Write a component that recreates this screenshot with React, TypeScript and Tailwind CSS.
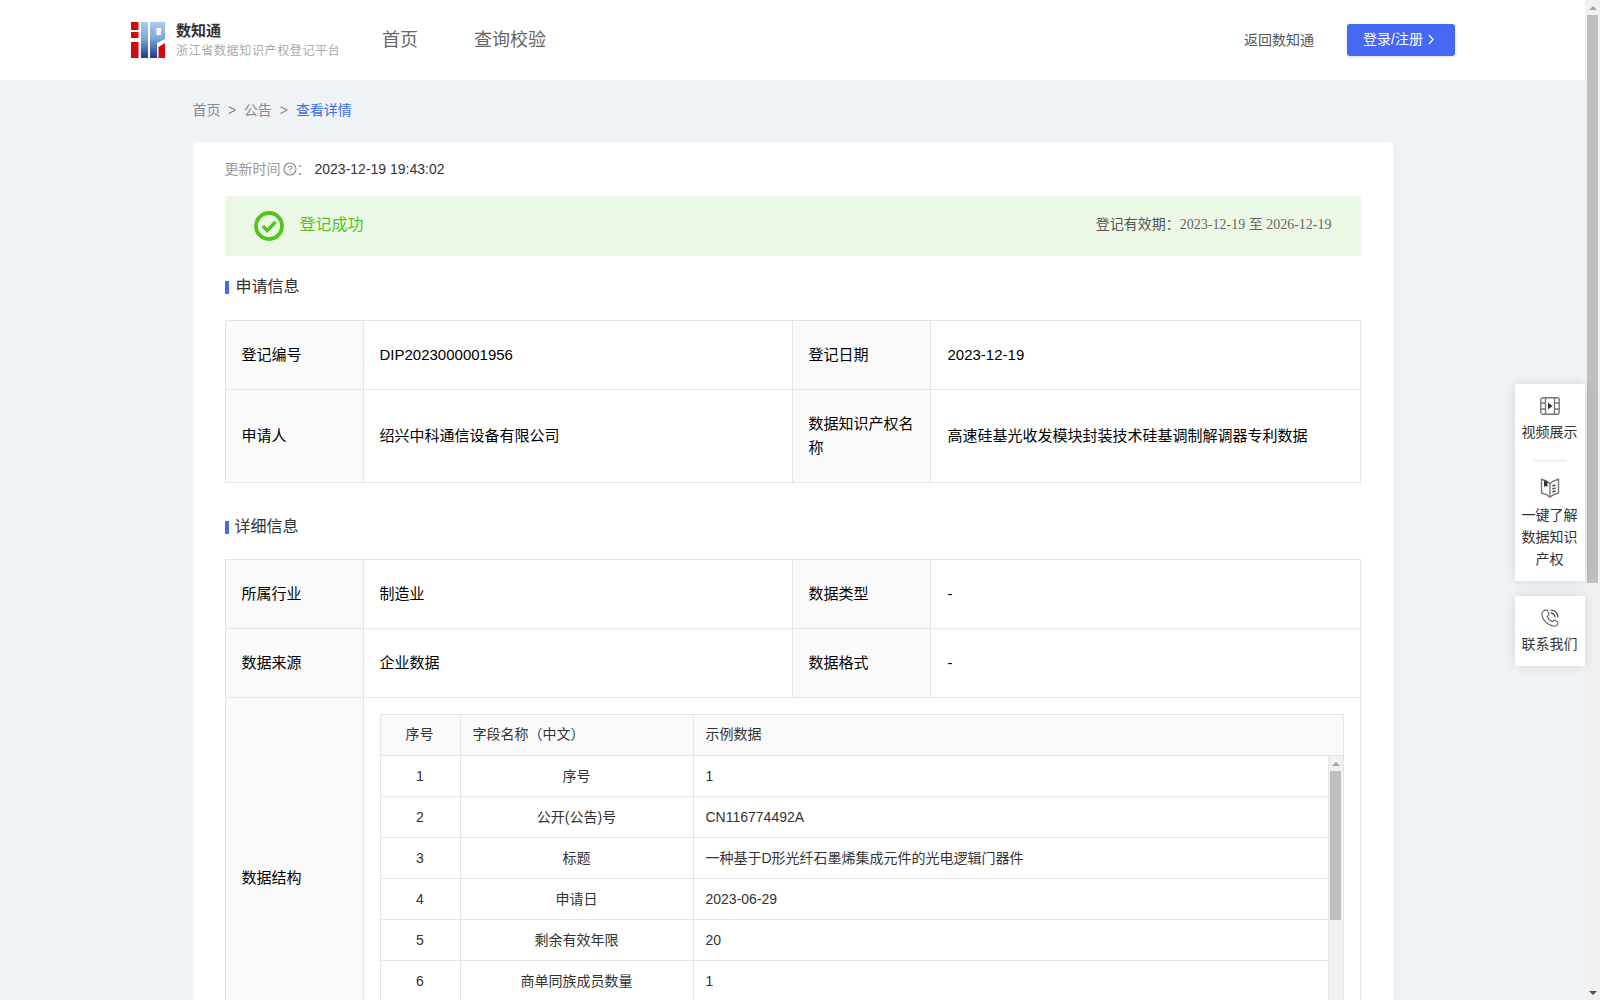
import React from "react";

function Logo() {
  return (
    <svg width="34" height="36" viewBox="0 0 34 36" className="shrink-0">
      <defs>
        <linearGradient id="lg" x1="0" y1="0" x2="0" y2="1">
          <stop offset="0" stopColor="#a9cbef" />
          <stop offset="0.45" stopColor="#7fa8dc" />
          <stop offset="1" stopColor="#1c3a8c" />
        </linearGradient>
      </defs>
      <rect x="0" y="0" width="7.5" height="8" fill="#d10a12" />
      <rect x="0" y="10" width="7.5" height="6" fill="#d10a12" />
      <rect x="0" y="20" width="7.5" height="16" fill="#d10a12" />
      <rect x="10" y="0" width="7" height="36" fill="url(#lg)" />
      <path d="M19 0H34V17L26 21V36H19Z" fill="url(#lg)" />
      <rect x="25.5" y="6" width="4.5" height="7" fill="#fff" />
      <path d="M27.5 25L34 21V36H27.5Z" fill="#d10a12" />
    </svg>
  );
}

function FilmIcon() {
  return (
    <svg width="20" height="18" viewBox="0 0 20 18" fill="none" stroke="#777" strokeWidth="1.4">
      <rect x="0.8" y="0.8" width="18.4" height="16.4" rx="2" />
      <path d="M5.5 1V17M14.5 1V17M1 6H5.5M1 12H5.5M14.5 6H19M14.5 12H19" />
      <path d="M8 5.5L12.5 9L8 12.5Z" fill="#333" stroke="none" />
    </svg>
  );
}

function BookIcon() {
  return (
    <svg width="20" height="20" viewBox="0 0 20 20" fill="none" stroke="#777" strokeWidth="1.4">
      <path d="M10 5.5C8 3.5 5 2 1.5 1.2V15C5 15.8 8 17.2 10 19.2C12 17.2 15 15.8 18.5 15V1.2C15.5 1.8 12 3.5 10 5.5Z" />
      <path d="M10 5.5V19" />
      <path d="M4 2.2L7.5 3.6V9L5.8 7.8L4 9Z" fill="#333" stroke="none" />
      <path d="M12.5 8L15.5 6.8M12.5 11L15.5 9.8M12.5 14L15.5 12.8" stroke="#444" />
    </svg>
  );
}

function PhoneIcon() {
  return (
    <svg width="20" height="20" viewBox="0 0 24 24" fill="none" stroke="#666" strokeWidth="1.3" strokeLinecap="round" strokeLinejoin="round">
      <path d="M7.5 2.5C8.3 2.5 9 3 9.3 3.8L10.6 7.2C10.8 7.8 10.6 8.4 10.2 8.8L8.6 10.2C9.6 13 11.8 15.4 14.6 16.6L16.2 15C16.6 14.6 17.3 14.4 17.8 14.7L20.8 16.4C21.5 16.8 21.8 17.6 21.5 18.4C20.8 20.4 19 22 16.8 21.8C9 21 2.6 14 2.2 7.4C2 5 4.6 2.5 7.5 2.5Z" />
      <path d="M13.5 2.5C17.8 3 21 6.4 21.5 10.5M13.5 6C15.8 6.5 17.6 8.2 18 10.5" stroke="#555" strokeWidth="1.6" />
    </svg>
  );
}

function ArrowUp({ fill }: { fill: string }) {
  return (
    <svg width="8" height="4" viewBox="0 0 8 4">
      <path d="M4 0L8 4H0Z" fill={fill} />
    </svg>
  );
}

function ArrowDown({ fill }: { fill: string }) {
  return (
    <svg width="8" height="4" viewBox="0 0 8 4">
      <path d="M4 4L8 0H0Z" fill={fill} />
    </svg>
  );
}

function SectionTitle({ children, gap }: { children: React.ReactNode; gap: string }) {
  return (
    <div className={`flex h-6 items-center text-base text-[#333] ${gap}`}>
      <span className="mt-[1px] h-[13px] w-1 shrink-0 bg-[#4569f5]" />
      <span>{children}</span>
    </div>
  );
}

const labelCell = "border border-[#e5e5e5] bg-[#fafafa] px-4 pb-[1px] align-middle text-left font-normal text-[15px] leading-6 text-black";
const valueCell = "border border-[#e5e5e5] px-4 pb-[1px] align-middle text-left text-[15px] leading-6 text-black";
const lastCell = "border border-[#e5e5e5] pl-[17px] pr-4 pb-[1px] align-middle text-left text-[15px] leading-6 text-black";

const rows: [string, string, string][] = [
  ["1", "序号", "1"],
  ["2", "公开(公告)号", "CN116774492A"],
  ["3", "标题", "一种基于D形光纤石墨烯集成元件的光电逻辑门器件"],
  ["4", "申请日", "2023-06-29"],
  ["5", "剩余有效年限", "20"],
  ["6", "商单同族成员数量", "1"],
];

function SideItem({ icon, gap, children }: { icon: React.ReactNode; gap: string; children: React.ReactNode }) {
  return (
    <div className="flex flex-col items-center text-center text-sm leading-[22px] text-[#333]">
      <div className="flex h-5 items-center justify-center">{icon}</div>
      <div className={`mr-[1px] w-[58px] ${gap}`}>{children}</div>
    </div>
  );
}

function Cols() {
  return (
    <colgroup>
      <col className="w-[138px]" />
      <col className="w-[429px]" />
      <col className="w-[138px]" />
      <col className="w-[430px]" />
    </colgroup>
  );
}

export default function App() {
  return (
    <div className="relative flex h-screen w-full overflow-hidden bg-[#eff3f6] [font-family:'Liberation_Sans','Noto_Sans_CJK_SC',sans-serif]">
      <div className="min-w-0 flex-1">
        <header className="flex h-20 items-center justify-between bg-white pl-[131px] pr-[130px]">
          <div className="flex items-center">
            <Logo />
            <div className="ml-[11px] w-[164px] pt-[1px]">
              <div className="text-[15px] font-bold leading-5 text-[#333]">数知通</div>
              <div className="whitespace-nowrap text-xs leading-5 tracking-[0.65px] text-[#aaa]">浙江省数据知识产权登记平台</div>
            </div>
            <nav className="ml-[42px] flex gap-[56px] text-lg text-[#666]">
              <span>首页</span>
              <span>查询校验</span>
            </nav>
          </div>
          <div className="flex items-center gap-[33px]">
            <span className="text-sm text-[#555]">返回数知通</span>
            <button className="flex h-8 w-[108px] items-center gap-[5px] rounded-[3px] bg-[#4569f5] pb-[2px] pl-[16px] text-sm text-white shadow-[0_1px_3px_rgba(69,105,245,0.2)]">
              <span>登录/注册</span>
              <svg width="6" height="11" viewBox="0 0 6 11" fill="none" stroke="#fff" strokeWidth="1.3">
                <path d="M1 1L5 5.5L1 10" />
              </svg>
            </button>
          </div>
        </header>

        <main className="mx-auto w-[1200px]">
          <div className="flex h-[62px] items-center pb-[3px] text-sm text-[#888]">
            <span>首页</span>
            <span className="mx-[7.5px]">&gt;</span>
            <span>公告</span>
            <span className="mx-[8px]">&gt;</span>
            <span className="text-[#3b6cf5]">查看详情</span>
          </div>

          <section className="rounded-t bg-white px-8 pt-4">
            <div className="flex h-[22px] items-center text-sm">
              <span className="text-[#999]">更新时间</span>
              <svg width="14" height="14" viewBox="0 0 14 14" fill="none" className="ml-[2px]">
                <circle cx="7" cy="7" r="6" stroke="#888" strokeWidth="1.1" />
                <path d="M5.2 5.6C5.2 3.4 8.9 3.5 8.9 5.5C8.9 6.9 7 6.8 7 8.4" stroke="#888" strokeWidth="1.1" />
                <circle cx="7" cy="10.1" r="0.7" fill="#888" />
              </svg>
              <span className="text-[#999]">：</span>
              <span className="ml-[4px] text-[#333]">2023-12-19 19:43:02</span>
            </div>

            <div className="mt-4 flex h-[60px] items-center justify-between bg-[#ecf8e6] pl-[29px] pr-[29px]">
              <div className="flex items-center gap-[16px]">
                <svg width="30" height="30" viewBox="0 0 30 30" fill="none">
                  <circle cx="15" cy="15" r="13" stroke="#52c41a" strokeWidth="3.8" />
                  <path d="M8.8 15L13.2 19.5L21.4 11" stroke="#52c41a" strokeWidth="3.4" />
                </svg>
                <span className="pb-[2px] text-base text-[#52c41a]">登记成功</span>
              </div>
              <div className="pb-[3px] text-sm text-[#555]">
                登记有效期：
                <span className="text-[#666] [font-family:'Liberation_Serif','Noto_Sans_CJK_SC',serif]">2023-12-19 至 2026-12-19</span>
              </div>
            </div>

            <div className="mt-[19px]">
              <SectionTitle gap="gap-[7px]">申请信息</SectionTitle>
            </div>
            <table className="mt-[21px] w-[1135px] table-fixed border-collapse">
              <Cols />
              <tbody>
                <tr className="h-[69px]">
                  <th className={labelCell}>登记编号</th>
                  <td className={valueCell}>DIP2023000001956</td>
                  <th className={labelCell}>登记日期</th>
                  <td className={lastCell}>2023-12-19</td>
                </tr>
                <tr className="h-[93px]">
                  <th className={labelCell}>申请人</th>
                  <td className={valueCell}>绍兴中科通信设备有限公司</td>
                  <th className={labelCell}>数据知识产权名称</th>
                  <td className={lastCell}>高速硅基光收发模块封装技术硅基调制解调器专利数据</td>
                </tr>
              </tbody>
            </table>

            <div className="mt-[32px]">
              <SectionTitle gap="gap-[6px]">详细信息</SectionTitle>
            </div>
            <table className="mt-[20px] w-[1135px] table-fixed border-collapse">
              <Cols />
              <tbody>
                <tr className="h-[69px]">
                  <th className={labelCell}>所属行业</th>
                  <td className={valueCell}>制造业</td>
                  <th className={labelCell}>数据类型</th>
                  <td className={lastCell}>-</td>
                </tr>
                <tr className="h-[69px]">
                  <th className={labelCell}>数据来源</th>
                  <td className={valueCell}>企业数据</td>
                  <th className={labelCell}>数据格式</th>
                  <td className={lastCell}>-</td>
                </tr>
                <tr className="h-[361px]">
                  <th className={labelCell}>数据结构</th>
                  <td colSpan={3} className="border border-[#e5e5e5] px-4 py-4 align-top">
                    <div className="h-[328px] w-[964px] border border-[#e5e5e5] text-sm text-[#333]">
                      <div className="flex h-[41px] border-b border-[#e5e5e5] bg-[#fafafa] leading-[39px]">
                        <div className="w-[80px] shrink-0 border-r border-[#e5e5e5] pr-[1px] text-center">序号</div>
                        <div className="w-[233px] shrink-0 border-r border-[#e5e5e5] pl-3">字段名称（中文）</div>
                        <div className="flex-1 pl-3">示例数据</div>
                      </div>
                      <div className="flex h-[285px]">
                        <div className="min-w-0 flex-1">
                          {rows.map((r) => (
                            <div key={r[0]} className="flex h-[41px] border-b border-[#e5e5e5] leading-10">
                              <div className="w-[80px] shrink-0 border-r border-[#e5e5e5] text-center">{r[0]}</div>
                              <div className="w-[233px] shrink-0 border-r border-[#e5e5e5] text-center">{r[1]}</div>
                              <div className="flex-1 pl-3">{r[2]}</div>
                            </div>
                          ))}
                        </div>
                        <div className="flex w-[15px] shrink-0 flex-col items-center border-l border-[#e5e5e5] bg-[#f1f1f1]">
                          <div className="flex h-[15px] items-center justify-center"><ArrowUp fill="#a3a3a3" /></div>
                          <div className="h-[149px] w-[11px] bg-[#bfbfbf]" />
                        </div>
                      </div>
                    </div>
                  </td>
                </tr>
              </tbody>
            </table>
          </section>
        </main>
      </div>

      <div className="flex h-full w-[15px] shrink-0 flex-col items-center justify-between bg-[#f1f1f1]">
        <div className="flex flex-col items-center">
          <div className="flex h-[15px] items-center justify-center"><ArrowUp fill="#a3a3a3" /></div>
          <div className="h-[568px] w-[11px] bg-[#bfbfbf]" />
        </div>
        <div className="flex h-[15px] items-center justify-center"><ArrowDown fill="#505050" /></div>
      </div>

      <aside className="absolute right-[15px] top-[384px] flex w-[70px] flex-col gap-[15px]">
        <div className="bg-white pb-[11px] pt-[12px] shadow-[0_0_10px_rgba(0,0,0,0.12)]">
          <SideItem icon={<FilmIcon />} gap="mt-[5px]">视频展示</SideItem>
          <div className="mx-auto mb-[17px] mt-[17px] h-px w-8 bg-[#e5e5e5]" />
          <SideItem icon={<BookIcon />} gap="mt-[6px]">一键了解数据知识产权</SideItem>
        </div>
        <div className="bg-white pb-[11px] pt-[12px] shadow-[0_0_10px_rgba(0,0,0,0.12)]">
          <SideItem icon={<PhoneIcon />} gap="mt-[5px]">联系我们</SideItem>
        </div>
      </aside>
    </div>
  );
}
